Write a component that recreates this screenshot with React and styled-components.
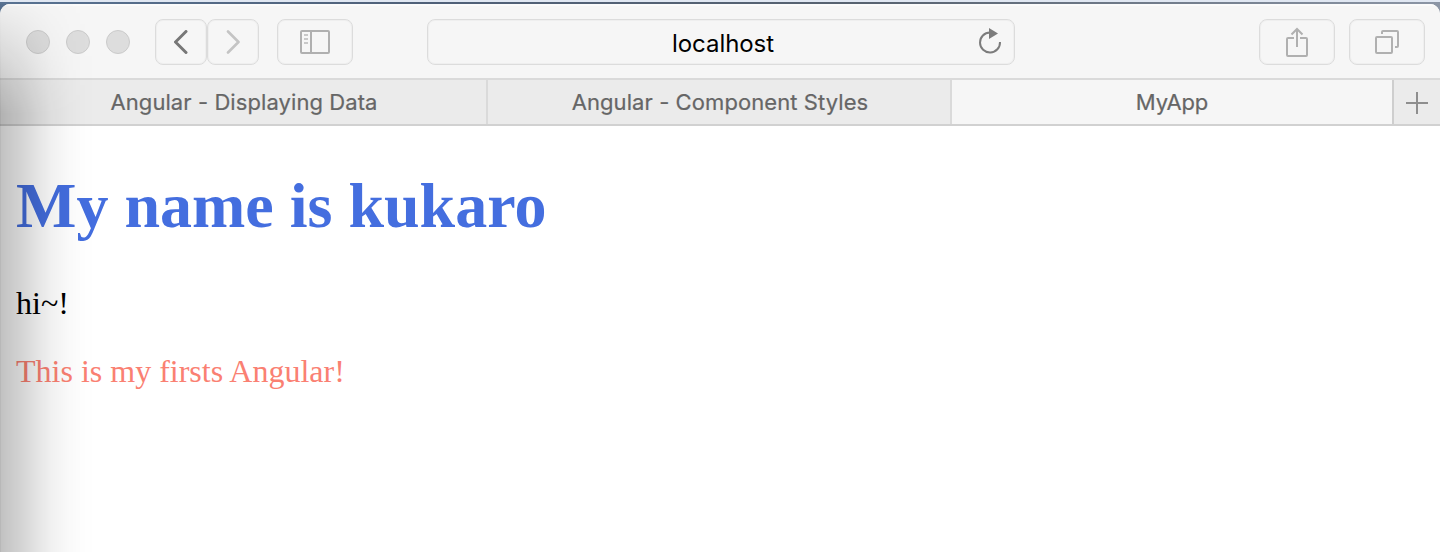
import React from "react";
import styled, { createGlobalStyle } from "styled-components";

const GlobalStyle = createGlobalStyle`
  * { box-sizing: border-box; }
  body { margin: 0; background: #fff; overflow: hidden; }
`;

const Desktop = styled.div`
  position: relative;
  width: 1440px;
  height: 552px;
  padding-top: 4px;
  overflow: hidden;
  background: linear-gradient(to bottom, #e0e7f2 0 2px, transparent 2px),
    linear-gradient(to right, #587292, #4f6078 30%, #576270 60%, #8b95a5);
`;

const Window = styled.div`
  height: 548px;
  display: flex;
  flex-direction: column;
  border-radius: 10px 10px 0 0;
  overflow: hidden;
  background: #fff;
`;

const Toolbar = styled.header`
  height: 76px;
  flex: none;
  display: flex;
  align-items: center;
  padding: 0 15px 0 26px;
  background: #f6f6f6;
  border-bottom: 2px solid #dadada;
  box-shadow: inset 0 2px #fbfbfb;
`;

const TrafficLights = styled.div`
  display: flex;
  gap: 16px;
  margin: 2px 25px 0 0;
`;

const Light = styled.span`
  width: 24px;
  height: 24px;
  border-radius: 50%;
  background: #dddddd;
  border: 1px solid #cbcbcb;
`;

const ToolButton = styled.button`
  display: flex;
  align-items: center;
  justify-content: center;
  width: ${(p) => p.$width || 76}px;
  height: 46px;
  margin: 2px ${(p) => p.$gap || 0}px 0 0;
  padding: 0;
  background: #f6f6f6;
  border: 1px solid #dcdcdc;
  box-shadow: inset 0 0 0 1px #efefef;
  border-radius: 8px;
`;

const AddressBar = styled.div`
  display: grid;
  grid-template-columns: 50px 1fr 36px;
  align-items: center;
  width: 588px;
  height: 46px;
  margin: 2px auto 0 74px;
  border: 1px solid #dcdcdc;
  box-shadow: inset 0 0 0 1px #efefef;
  border-radius: 8px;
`;

const Address = styled.span`
  grid-column: 2;
  text-align: center;
  font: 24px/40px Inter, "Liberation Sans", sans-serif;
  letter-spacing: -0.05px;
  color: #000;
  padding: 3px 10px 0 0;
`;

const TabBar = styled.nav`
  height: 46px;
  flex: none;
  display: flex;
  background: #ebebeb;
  border-bottom: 2px solid #d1d1d1;
`;

const Tab = styled.div`
  width: ${(p) => p.$width}px;
  padding-left: ${(p) => (p.$active ? 0 : 2)}px;
  text-align: center;
  font: 22px/45px Inter, "Liberation Sans", sans-serif;
  letter-spacing: ${(p) => (p.$active ? -0.1 : 0.08)}px;
  white-space: nowrap;
  color: #666;
  -webkit-text-stroke: 0.2px #666;
  background: ${(p) => (p.$active ? "#f6f6f6" : "#ebebeb")};
  border-right: 2px solid ${(p) => (p.$active ? "#cecece" : "#dadada")};
`;

const NewTab = styled.div`
  flex: 1;
  display: flex;
  align-items: center;
  justify-content: center;
  padding-top: 2px;
`;

const Page = styled.main`
  flex: 1;
  padding: 43px 16px 0;
  font-family: "Liberation Serif", "Times New Roman", serif;
  font-size: 32px;
`;

const Title = styled.h1`
  margin: 0 0 42px;
  font-size: 64px;
  line-height: 74px;
  font-weight: 700;
  color: #446edf;
`;

const Paragraph = styled.p`
  margin: 0 0 32px;
  line-height: 36px;
  color: ${(p) => p.$color || "#000"};
`;

/* Shadow cast over the window by a neighbouring one on its left */
const EdgeShade = styled.div`
  position: absolute;
  left: 0;
  top: 4px;
  width: 96px;
  height: 548px;
  pointer-events: none;
  border-left: 1px solid rgba(0, 0, 0, 0.28);
  background: linear-gradient(
    to right,
    rgba(0, 0, 0, 0.24),
    rgba(0, 0, 0, 0.185) 17%,
    rgba(0, 0, 0, 0.12) 34%,
    rgba(0, 0, 0, 0.06) 52%,
    rgba(0, 0, 0, 0.022) 70%,
    rgba(0, 0, 0, 0.008) 85%,
    transparent
  );
  mask-image: linear-gradient(to bottom, rgba(0, 0, 0, 0.1), rgba(0, 0, 0, 0.4) 40px, #000 110px);
`;

const Icon = ({ w, h, color = "#b0b0b0", sw = 2, children }) => (
  <svg width={w} height={h} viewBox={`0 0 ${w} ${h}`} fill="none" stroke={color} strokeWidth={sw}>
    {children}
  </svg>
);

export default function App() {
  return (
    <>
      <GlobalStyle />
      <Desktop>
        <Window>
          <Toolbar>
            <TrafficLights>
              <Light />
              <Light />
              <Light />
            </TrafficLights>
            <ToolButton $width={52} aria-label="Back">
              <Icon w={14} h={24} color="#777" sw={3}>
                <path d="M12 1.500 1.500 12 12 22.500" strokeLinecap="round" strokeLinejoin="round" />
              </Icon>
            </ToolButton>
            <ToolButton $width={52} $gap={18} aria-label="Forward">
              <Icon w={14} h={24} color="#c4c4c4" sw={2.6}>
                <path d="M2 1.500 12.500 12 2 22.500" strokeLinecap="round" strokeLinejoin="round" />
              </Icon>
            </ToolButton>
            <ToolButton aria-label="Sidebar">
              <Icon w={30} h={24}>
                <rect x="1" y="1" width="28" height="22" rx="1" />
                <path d="M11 1v22" />
                <path d="M4 5h4M4 9h4M4 13h4" stroke="#c8c8c8" />
              </Icon>
            </ToolButton>
            <AddressBar>
              <Address>localhost</Address>
              <Icon w={24} h={28} color="#7c7c7c">
                <path d="M12 4.500A10 10 0 1 0 22 14" />
                <path d="M11 0v11l9-5.500z" fill="#7c7c7c" stroke="none" />
              </Icon>
            </AddressBar>
            <ToolButton $gap={14} aria-label="Share">
              <Icon w={22} h={32}>
                <path d="M8 12H2q-1 0-1 1v16q0 1 1 1h18q1 0 1-1V13q0-1-1-1h-6" />
                <path d="M11 21V3M5.500 8.500 11 3l5.500 5.500" />
              </Icon>
            </ToolButton>
            <ToolButton aria-label="Show tabs">
              <Icon w={24} h={24}>
                <rect x="1" y="7" width="16" height="16" rx="1" />
                <path d="M7 4V2q0-1 1-1h14q1 0 1 1v14q0 1-1 1h-2" />
              </Icon>
            </ToolButton>
          </Toolbar>
          <TabBar>
            <Tab $width={488}>Angular - Displaying Data</Tab>
            <Tab $width={464}>Angular - Component Styles</Tab>
            <Tab $width={442} $active>
              MyApp
            </Tab>
            <NewTab>
              <Icon w={22} h={22} color="#8e8e8e">
                <path d="M11 0v22M0 11h22" />
              </Icon>
            </NewTab>
          </TabBar>
          <Page>
            <Title>My name is kukaro</Title>
            <Paragraph>hi~!</Paragraph>
            <Paragraph $color="salmon">This is my firsts Angular!</Paragraph>
          </Page>
        </Window>
        <EdgeShade />
      </Desktop>
    </>
  );
}
